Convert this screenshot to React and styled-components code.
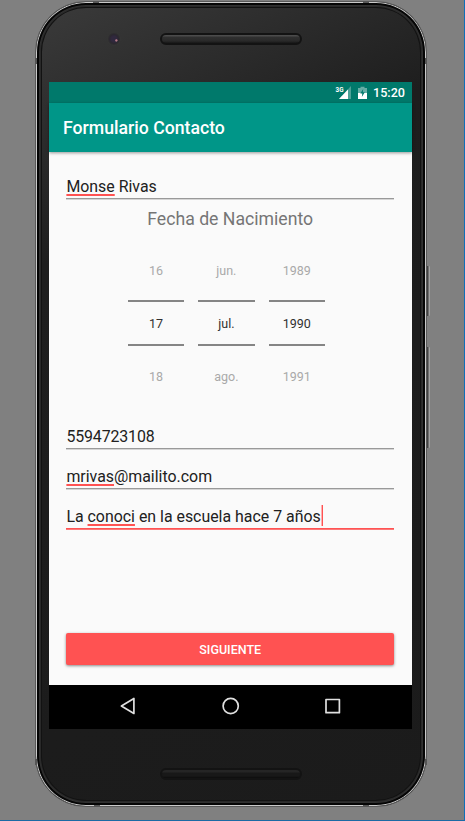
import React from "react";
import styled, { createGlobalStyle } from "styled-components";

const GlobalStyle = createGlobalStyle`
  * { box-sizing: border-box; }
  body {
    margin: 0;
    font-family: Roboto, "Noto Sans", sans-serif;
    background: #808080;
  }
`;

const Stage = styled.main`
  width: 465px;
  height: 821px;
  padding: 1px 0 0 35px;
  background: #808080;
  border-right: 1px solid #0f6fb8;
  border-bottom: 1px solid #1b6aa5;
  overflow: hidden;
`;

const Phone = styled.div`
  position: relative;
  display: flex;
  flex-direction: column;
  width: 392px;
  height: 806px;
  padding: 0 14px 0 13px;
  border: 1px solid #5a5a5a;
  border-radius: 51px;
  background: linear-gradient(155deg, #3b3b3b 0, #2c2c2c 14%, #1e1e1e 27%, #1b1b1b 100%);
  box-shadow:
    inset 0 0 0 1px #c9c9c9,
    inset 0 0 0 3px #050505,
    inset 0 0 0 4px #303030,
    inset 0 0 0 5px #292929,
    inset 0 0 0 6px #121212;
`;

const Antenna = styled.i`
  position: absolute;
  left: ${(p) => p.$x}px;
  top: ${(p) => p.$y}px;
  width: ${(p) => (p.$side ? 2 : 6)}px;
  height: ${(p) => (p.$side ? 6 : 2)}px;
  background: #555;
`;

const SideButton = styled.i`
  position: absolute;
  left: 391px;
  top: ${(p) => p.$y}px;
  width: 3px;
  height: ${(p) => p.$length}px;
  border-left: 1px solid #444;
  border-right: 1px solid #a0a0a0;
  border-radius: 0 1px 1px 0;
  background: #707070;
`;

const TopBezel = styled.div`
  display: flex;
  justify-content: center;
  height: 80px;
  padding-top: 31px;
`;

const BottomBezel = styled(TopBezel)`
  height: 76px;
  padding-top: 39px;
`;

const Camera = styled.i`
  position: absolute;
  left: 71px;
  top: 30px;
  width: 14px;
  height: 14px;
  border: 1px solid #353535;
  border-radius: 50%;
  background:
    radial-gradient(circle at 70% 62%, #b57a88 0 0.7px, transparent 1.6px),
    radial-gradient(circle, #30283e 0 2.5px, #2b2730 4.5px, #303030 6px);
`;

const Speaker = styled.div`
  width: 142px;
  height: 12px;
  border: 2px solid #131313;
  border-radius: 6px;
  background: ${(p) => (p.$dim
    ? "linear-gradient(#252525 0 2px, #181818 3px 6px, #0c0c0c)"
    : "linear-gradient(#4b4b4b 0 1px, #303030 2px, #292929 6px, #171717)")};
`;

const Screen = styled.div`
  display: flex;
  flex-direction: column;
  width: 363px;
  height: 647px;
  background: #fafafa;
`;

const StatusBar = styled.header`
  display: flex;
  align-items: center;
  justify-content: flex-end;
  height: 21px;
  padding-right: 7px;
  background: #00796b;
  color: #fff;
  font-size: 12.6px;
  font-weight: 500;
`;

const Network = styled.svg`
  width: 17px;
  height: 15px;
  margin-right: 6px;
`;

const Battery = styled.svg`
  width: 9px;
  height: 13px;
  margin-right: 6px;
`;

const AppBar = styled.h1`
  display: flex;
  align-items: center;
  flex: none;
  height: 49px;
  margin: 0;
  padding: 0 14px;
  background: #009688;
  box-shadow: 0 1px 3px rgba(0, 0, 0, 0.4);
  color: #fff;
  font-size: 17.66px;
  font-weight: 500;
`;

const Form = styled.section`
  display: flex;
  flex-direction: column;
  flex: 1;
  padding: 7px 18px 20px 17.4px;
`;

const Field = styled.div`
  flex: none;
  height: 40px;
  padding-top: 16px;
  border-bottom: ${(p) => (p.$focused ? "1.5px solid #ff5252" : "1px solid #999")};
  box-shadow: 0 1px ${(p) => (p.$focused ? "#fb7878" : "#d5d5d5")};
  color: #212121;
  font-size: 15.9px;
  letter-spacing: ${(p) => (p.$numeric ? "-0.12px" : "normal")};
  line-height: 24px;
  white-space: nowrap;
`;

const Misspelled = styled.span`
  text-decoration: underline 2px #ff5252;
  text-underline-offset: 2px;
  text-decoration-skip-ink: none;
`;

const Caret = styled.i`
  display: inline-block;
  width: 2px;
  height: 21px;
  margin-bottom: -4px;
  vertical-align: baseline;
  background: linear-gradient(90deg, #fdb0b0 50%, #ff5252 50%);
`;

const Label = styled.h2`
  height: 40px;
  margin: 0;
  font-size: 17.66px;
  font-weight: 400;
  line-height: 40px;
  text-align: center;
  color: #757575;
`;

const DatePicker = styled.div`
  display: flex;
  gap: 14px;
  height: 170px;
  margin-left: 61.4px;
  padding-top: 2px;
`;

const Wheel = styled.div`
  display: grid;
  grid-template-rows: 59px 46px 61px;
  width: 56.4px;
  font-size: 12.5px;
  text-align: center;
`;

const Option = styled.span`
  display: grid;
  place-items: center;
  color: ${(p) => (p.$selected ? "#303030" : "#a9a9a9")};
  ${(p) => p.$selected && `
    border-top: 2px solid #858585;
    border-bottom: 2px solid #858585;
  `}
`;

const SubmitButton = styled.button`
  height: 32px;
  margin-top: auto;
  padding: 1px 0 0;
  border: 0;
  border-radius: 2px;
  background: #ff5252;
  box-shadow: 0 1px 3px rgba(0, 0, 0, 0.45);
  color: #fff;
  font: 500 12.5px Roboto, sans-serif;
`;

const NavBar = styled.nav`
  display: grid;
  grid-template-columns: repeat(3, 102px);
  justify-content: center;
  place-items: center;
  flex: none;
  height: 44px;
  padding-bottom: 3px;
  background: #000;
`;

const NavIcon = styled.svg`
  width: 20px;
  height: 20px;
  fill: none;
  stroke: #e0e0e0;
  stroke-width: 1.7;
  stroke-linejoin: round;
`;

const columns = [
  ["16", "17", "18"],
  ["jun.", "jul.", "ago."],
  ["1989", "1990", "1991"],
];

export default function App() {
  return (
    <>
      <GlobalStyle />
      <Stage>
        <Phone>
          <Antenna $x={57} $y={-1} />
          <Antenna $x={327} $y={-1} />
          <Antenna $x={-1} $y={56} $side />
          <Antenna $x={389} $y={56} $side />
          <Antenna $x={58} $y={803} />
          <Antenna $x={327} $y={803} />
          <Antenna $x={-1} $y={757} $side />
          <Antenna $x={389} $y={757} $side />
          <SideButton $y={264} $length={50} />
          <SideButton $y={345} $length={101} />
          <TopBezel>
            <Camera />
            <Speaker />
          </TopBezel>
          <Screen>
            <StatusBar>
              <Network viewBox="0 0 17 15">
                <path d="M16 1V14H4Z" fill="#4da197" />
                <path d="M13 4.5V14H4Z" fill="#fff" />
                <text x="0.5" y="7.2" fill="#fff" fontSize="7.6" fontWeight="700" textLength="8" lengthAdjust="spacingAndGlyphs">3G</text>
              </Network>
              <Battery viewBox="0 0 9 13">
                <path d="M0 2h2.5V.7h4V2H9v5H0Z" fill="#66aea6" />
                <path d="M0 7h9v6H0Z" fill="#fff" />
                <path d="M5.2 3 2.3 7.6h2L3.8 11 6.8 6.3h-2Z" fill="#00796b" />
              </Battery>
              15:20
            </StatusBar>
            <AppBar>Formulario Contacto</AppBar>
            <Form>
              <Field><Misspelled>Monse</Misspelled> Rivas</Field>
              <Label>Fecha de Nacimiento</Label>
              <DatePicker>
                {columns.map((values) => (
                  <Wheel key={values[1]}>
                    {values.map((value, i) => (
                      <Option key={value} $selected={i === 1}>{value}</Option>
                    ))}
                  </Wheel>
                ))}
              </DatePicker>
              <Field $numeric>5594723108</Field>
              <Field><Misspelled>mrivas</Misspelled>@mailito.com</Field>
              <Field $focused>La <Misspelled>conoci</Misspelled> en la escuela hace 7 años<Caret /></Field>
              <SubmitButton>SIGUIENTE</SubmitButton>
            </Form>
            <NavBar>
              <NavIcon viewBox="0.3 0 20 20"><path d="M15.2 2.5V17.5L2.7 10Z" /></NavIcon>
              <NavIcon viewBox="0.3 0 20 20"><circle cx="10" cy="10" r="7.6" /></NavIcon>
              <NavIcon viewBox="0.3 0 20 20"><rect x="3.3" y="3.5" width="13.4" height="13.2" /></NavIcon>
            </NavBar>
          </Screen>
          <BottomBezel>
            <Speaker $dim />
          </BottomBezel>
        </Phone>
      </Stage>
    </>
  );
}
